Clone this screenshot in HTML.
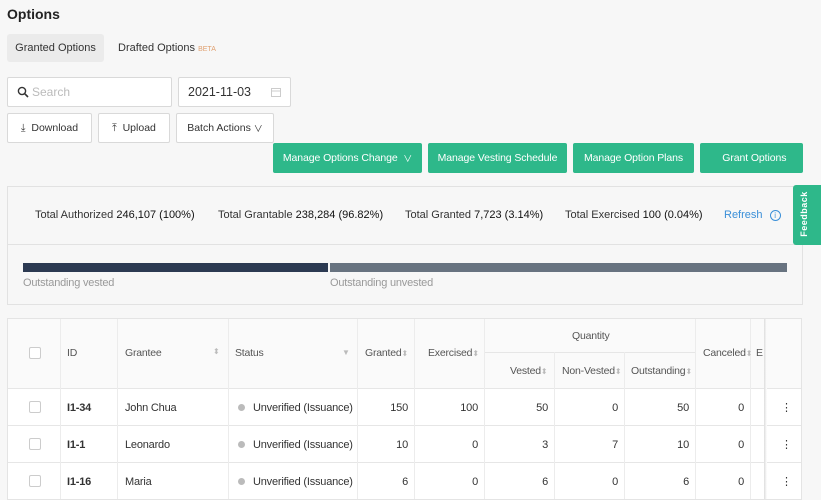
<!DOCTYPE html>
<html><head><style>
*{box-sizing:border-box;margin:0;padding:0}
body{width:821px;height:500px;overflow:hidden;background:#f7f7f7;font-family:"Liberation Sans","Noto Sans CJK KR",sans-serif;color:#333;position:relative;font-size:12px}
.a{position:absolute}
.btn{position:absolute;background:#fff;border:1px solid #d9d9d9;border-radius:2px;font-size:10.5px;color:#333;display:flex;align-items:center;justify-content:center;height:30px;top:113px}
.g{position:absolute;top:143px;height:30px;background:#2eb88a;color:#fff;font-size:10.5px;letter-spacing:-0.1px;display:flex;align-items:center;justify-content:center;border-radius:2px}
.tbl{position:absolute;left:7px;top:318px;width:795px;height:182px;background:#fff;border:1px solid #e4e4e4}
.vl{position:absolute;width:1px;background:#ececec}
.hl{position:absolute;height:1px;background:#e6e6e6;left:0;right:0}
.t{position:absolute;font-size:11px;letter-spacing:-0.2px;white-space:nowrap}
.st{position:absolute;font-size:11px;white-space:nowrap;top:209px}
.h{color:#555;font-size:10.5px}
.cb{position:absolute;width:12px;height:12px;border:1px solid #ccc;border-radius:2px;background:#fff;left:21px}
.r{text-align:right}
.dot{display:inline-block;width:7px;height:7px;border-radius:50%;background:#bbb;margin-right:8px;vertical-align:0px}
.s{color:#bbb;font-size:8px}
</style></head><body>
<div class="a" style="left:7px;top:6px;font-size:14px;font-weight:bold;color:#222">Options</div>
<div class="a" style="left:7px;top:34px;width:97px;height:28px;background:#ebebeb;border-radius:3px;font-size:11px;display:flex;align-items:center;justify-content:center">Granted Options</div>
<div class="a" style="left:118px;top:42px;font-size:11px">Drafted Options <span style="font-size:7px;color:#e0a070">BETA</span></div>
<div class="a" style="left:7px;top:77px;width:165px;height:30px;background:#fff;border:1px solid #d9d9d9;border-radius:2px">
<svg class="a" style="left:9px;top:8px" width="12" height="12" viewBox="0 0 12 12"><circle cx="5" cy="5" r="3.6" fill="none" stroke="#333" stroke-width="1.4"/><path d="M7.6 7.6 11 11" stroke="#333" stroke-width="1.6"/></svg>
<span class="a" style="left:24px;top:7px;color:#bbb;font-size:12px">Search</span></div>
<div class="a" style="left:178px;top:77px;width:113px;height:30px;background:#fff;border:1px solid #d9d9d9;border-radius:2px">
<span class="a" style="left:9px;top:7px;font-size:12.5px">2021-11-03</span>
<svg class="a" style="left:92px;top:9px" width="10" height="10" viewBox="0 0 10 10"><rect x="0.5" y="1.5" width="9" height="8" fill="none" stroke="#ccc"/><path d="M0.5 4h9" stroke="#ccc"/></svg></div>
<div class="btn" style="left:7px;width:85px">⤓&nbsp; Download</div>
<div class="btn" style="left:98px;width:72px">⤒&nbsp; Upload</div>
<div class="btn" style="left:176px;width:98px">Batch Actions&nbsp; <span style="font-size:9px">∨</span></div>
<div class="g" style="left:273px;width:149px">Manage Options Change &nbsp;<span style="font-size:9px">∨</span></div>
<div class="g" style="left:428px;width:139px">Manage Vesting Schedule</div>
<div class="g" style="left:573px;width:121px">Manage Option Plans</div>
<div class="g" style="left:700px;width:103px">&nbsp;&nbsp;Grant Options</div>
<div class="a" style="left:7px;top:186px;width:796px;height:119px;border:1px solid #e2e2e2"></div>
<div class="a" style="left:8px;top:244px;width:794px;height:1px;background:#e2e2e2"></div>
<div class="st" style="left:35px">Total Authorized <span style="color:#111">246,107 (100%)</span></div>
<div class="st" style="left:218px">Total Grantable <span style="color:#111">238,284 (96.82%)</span></div>
<div class="st" style="left:405px">Total Granted <span style="color:#111">7,723 (3.14%)</span></div>
<div class="st" style="left:565px">Total Exercised <span style="color:#111">100 (0.04%)</span></div>
<div class="st" style="left:724px;color:#3a8fd8">Refresh <span style="display:inline-block;width:11px;height:11px;border:1px solid #3a8fd8;border-radius:50%;font-size:8px;text-align:center;line-height:10px;margin-left:4px">i</span></div>
<div class="a" style="left:23px;top:263px;width:305px;height:9px;background:#2c3a52"></div>
<div class="a" style="left:330px;top:263px;width:457px;height:9px;background:#687380"></div>
<div class="t" style="left:23px;top:277px;color:#999;font-size:11px">Outstanding vested</div>
<div class="t" style="left:330px;top:277px;color:#999;font-size:11px">Outstanding unvested</div>
<div class="a" style="left:793px;top:185px;width:28px;height:60px;background:#2eb88a;border-radius:3px 0 0 3px;"><span class="a" style="color:#fff;font-size:9px;font-weight:bold;transform:rotate(-90deg);left:-12px;top:24px;letter-spacing:0.5px">Feedback</span></div>
<div class="tbl">
<div class="a" style="left:0;top:0;right:0;height:70px;background:#fafafa"></div>
<div class="hl" style="top:69px"></div><div class="hl" style="top:106px"></div><div class="hl" style="top:143px"></div>
<div class="a" style="left:477px;top:33px;width:211px;height:1px;background:#e6e6e6"></div>
<div class="vl" style="left:52px;top:0;bottom:0"></div><div class="vl" style="left:109px;top:0;bottom:0"></div><div class="vl" style="left:220px;top:0;bottom:0"></div><div class="vl" style="left:349px;top:0;bottom:0"></div><div class="vl" style="left:406px;top:0;bottom:0"></div><div class="vl" style="left:476px;top:0;bottom:0"></div><div class="vl" style="left:546px;top:33px;bottom:0"></div><div class="vl" style="left:616px;top:33px;bottom:0"></div><div class="vl" style="left:687px;top:0;bottom:0"></div><div class="vl" style="left:742px;top:0;bottom:0"></div>
<div class="a" style="left:756px;top:0;bottom:0;width:3px;background:linear-gradient(90deg,#ddd,#fff)"></div>
<div class="cb" style="top:28px"></div><div class="cb" style="top:82px"></div><div class="cb" style="top:119px"></div><div class="cb" style="top:156px"></div>
<div class="t h" style="left:59px;top:28px">ID</div>
<div class="t h" style="left:117px;top:28px">Grantee</div><div class="t s" style="left:205px;top:28px">⬍</div>
<div class="t h" style="left:227px;top:28px">Status</div><div class="t s" style="left:334px;top:29px">▼</div>
<div class="t h" style="left:357px;top:28px">Granted<span class="s">⬍</span></div>
<div class="t h" style="left:420px;top:28px">Exercised<span class="s">⬍</span></div>
<div class="t h" style="left:564px;top:11px">Quantity</div>
<div class="t h" style="left:502px;top:46px">Vested<span class="s">⬍</span></div>
<div class="t h" style="left:554px;top:46px">Non-Vested<span class="s">⬍</span></div>
<div class="t h" style="left:623px;top:46px">Outstanding<span class="s">⬍</span></div>
<div class="t h" style="left:695px;top:28px">Canceled<span class="s">⬍</span></div>
<div class="t h" style="left:748px;top:28px">E</div>
<div class="t" style="left:59px;top:83px;font-weight:bold">I1-34</div><div class="t" style="left:117px;top:83px">John Chua</div><div class="t" style="left:230px;top:83px"><span class="dot"></span>Unverified (Issuance)</div>
<div class="t r" style="right:393px;top:83px">150</div><div class="t r" style="right:323px;top:83px">100</div><div class="t r" style="right:253px;top:83px">50</div><div class="t r" style="right:183px;top:83px">0</div><div class="t r" style="right:112px;top:83px">50</div><div class="t r" style="right:57px;top:83px">0</div><div class="t" style="left:773px;top:82px">⋮</div>
<div class="t" style="left:59px;top:120px;font-weight:bold">I1-1</div><div class="t" style="left:117px;top:120px">Leonardo</div><div class="t" style="left:230px;top:120px"><span class="dot"></span>Unverified (Issuance)</div>
<div class="t r" style="right:393px;top:120px">10</div><div class="t r" style="right:323px;top:120px">0</div><div class="t r" style="right:253px;top:120px">3</div><div class="t r" style="right:183px;top:120px">7</div><div class="t r" style="right:112px;top:120px">10</div><div class="t r" style="right:57px;top:120px">0</div><div class="t" style="left:773px;top:119px">⋮</div>
<div class="t" style="left:59px;top:157px;font-weight:bold">I1-16</div><div class="t" style="left:117px;top:157px">Maria</div><div class="t" style="left:230px;top:157px"><span class="dot"></span>Unverified (Issuance)</div>
<div class="t r" style="right:393px;top:157px">6</div><div class="t r" style="right:323px;top:157px">0</div><div class="t r" style="right:253px;top:157px">6</div><div class="t r" style="right:183px;top:157px">0</div><div class="t r" style="right:112px;top:157px">6</div><div class="t r" style="right:57px;top:157px">0</div><div class="t" style="left:773px;top:156px">⋮</div>
</div>
</body></html>
